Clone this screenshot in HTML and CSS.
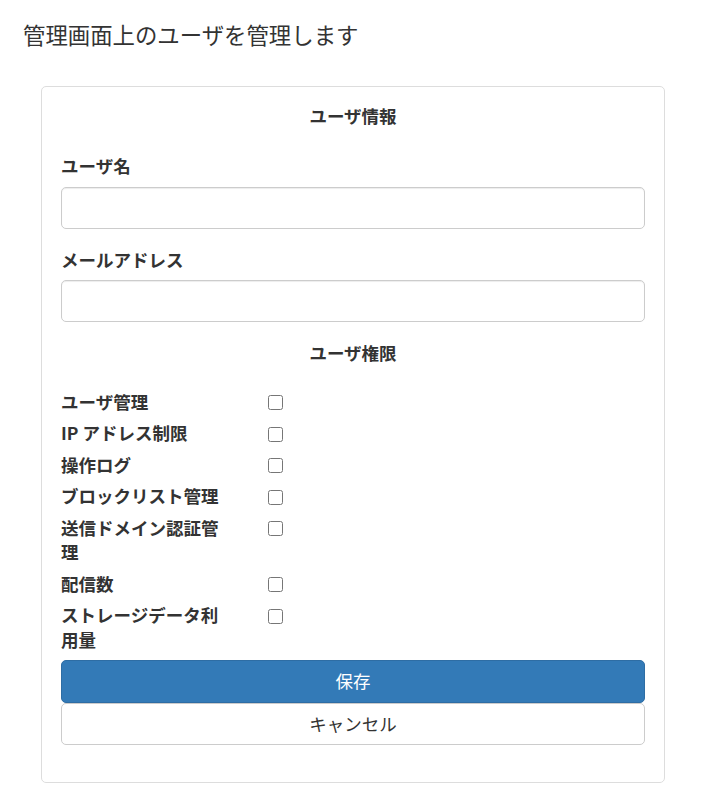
FILE: index.html
```html
<!DOCTYPE html>
<html lang="ja">
<head>
<meta charset="utf-8">
<title>ユーザ管理</title>
<link rel="stylesheet" href="styles.css">
</head>
<body>
<h1 class="page-title">管理画面上のユーザを管理します</h1>
<form class="panel">
  <h2 class="section-title">ユーザ情報</h2>
  <div class="field">
    <label class="field-label" for="username">ユーザ名</label>
    <input class="text-input" id="username" type="text">
  </div>
  <div class="field">
    <label class="field-label" for="email">メールアドレス</label>
    <input class="text-input" id="email" type="text">
  </div>
  <h2 class="section-title section-title-perm">ユーザ権限</h2>
  <div class="perm-list">
    <label class="perm-row"><span class="perm-label">ユーザ管理</span><input class="perm-check" type="checkbox"></label>
    <label class="perm-row"><span class="perm-label">IP アドレス制限</span><input class="perm-check" type="checkbox"></label>
    <label class="perm-row"><span class="perm-label">操作ログ</span><input class="perm-check" type="checkbox"></label>
    <label class="perm-row"><span class="perm-label">ブロックリスト管理</span><input class="perm-check" type="checkbox"></label>
    <label class="perm-row"><span class="perm-label">送信ドメイン認証管理</span><input class="perm-check" type="checkbox"></label>
    <label class="perm-row"><span class="perm-label">配信数</span><input class="perm-check" type="checkbox"></label>
    <label class="perm-row"><span class="perm-label">ストレージデータ利用量</span><input class="perm-check" type="checkbox"></label>
  </div>
  <div class="actions">
    <button class="btn btn-primary" type="button">保存</button>
    <button class="btn btn-default" type="button">キャンセル</button>
  </div>
</form>
</body>
</html>
```

FILE: styles.css
```css
* {
  box-sizing: border-box;
}

body {
  margin: 0;
  font-family: "Noto Sans CJK JP", "Noto Sans", sans-serif;
  color: #333;
  background: #fff;
}

.page-title {
  margin: 0;
  padding: 17px 0 0 23px;
  font-size: 22.4px;
  line-height: 34px;
  font-weight: 400;
  color: #333;
}

.panel {
  margin: 35px 0 0 41px;
  width: 624px;
  border: 1px solid #ddd;
  border-radius: 5px;
  padding: 17px 19px 37px 19px;
}

.section-title {
  margin: 0 0 25.5px;
  text-align: center;
  font-size: 17.5px;
  line-height: 24.5px;
  font-weight: 700;
}

.section-title-perm {
  margin-top: 0;
  margin-bottom: 24.25px;
}

.field {
  display: flex;
  flex-direction: column;
  margin-bottom: 19px;
}

.field-label {
  font-size: 17.5px;
  line-height: 24.5px;
  font-weight: 700;
  margin-bottom: 8px;
}

.text-input {
  display: block;
  width: 100%;
  height: 42px;
  border: 1px solid #ccc;
  border-radius: 5px;
  padding: 6px 15px;
  font-size: 17.5px;
  font-family: inherit;
  box-shadow: inset 0 1px 1px rgba(0, 0, 0, 0.075);
}

.perm-list {
  display: flex;
  flex-direction: column;
  gap: 7px;
}

.perm-row {
  display: grid;
  grid-template-columns: 160px 15px;
  column-gap: 47px;
  align-items: start;
  font-size: 17.5px;
  line-height: 24.5px;
  font-weight: 700;
}

.perm-check {
  width: 15px;
  height: 15px;
  margin: 5.5px 0 0;
}

.actions {
  margin-top: 7.75px;
  display: flex;
  flex-direction: column;
}

.btn {
  display: block;
  width: 100%;
  height: 42.5px;
  border-radius: 5px;
  font-family: inherit;
  font-size: 17.5px;
  font-weight: 400;
  line-height: 24.5px;
  padding: 0;
}

.btn-primary {
  background: #337ab7;
  border: 1px solid #2e6da4;
  color: #fff;
}

.btn-default {
  background: #fff;
  border: 1px solid #ccc;
  color: #333;
}
```
